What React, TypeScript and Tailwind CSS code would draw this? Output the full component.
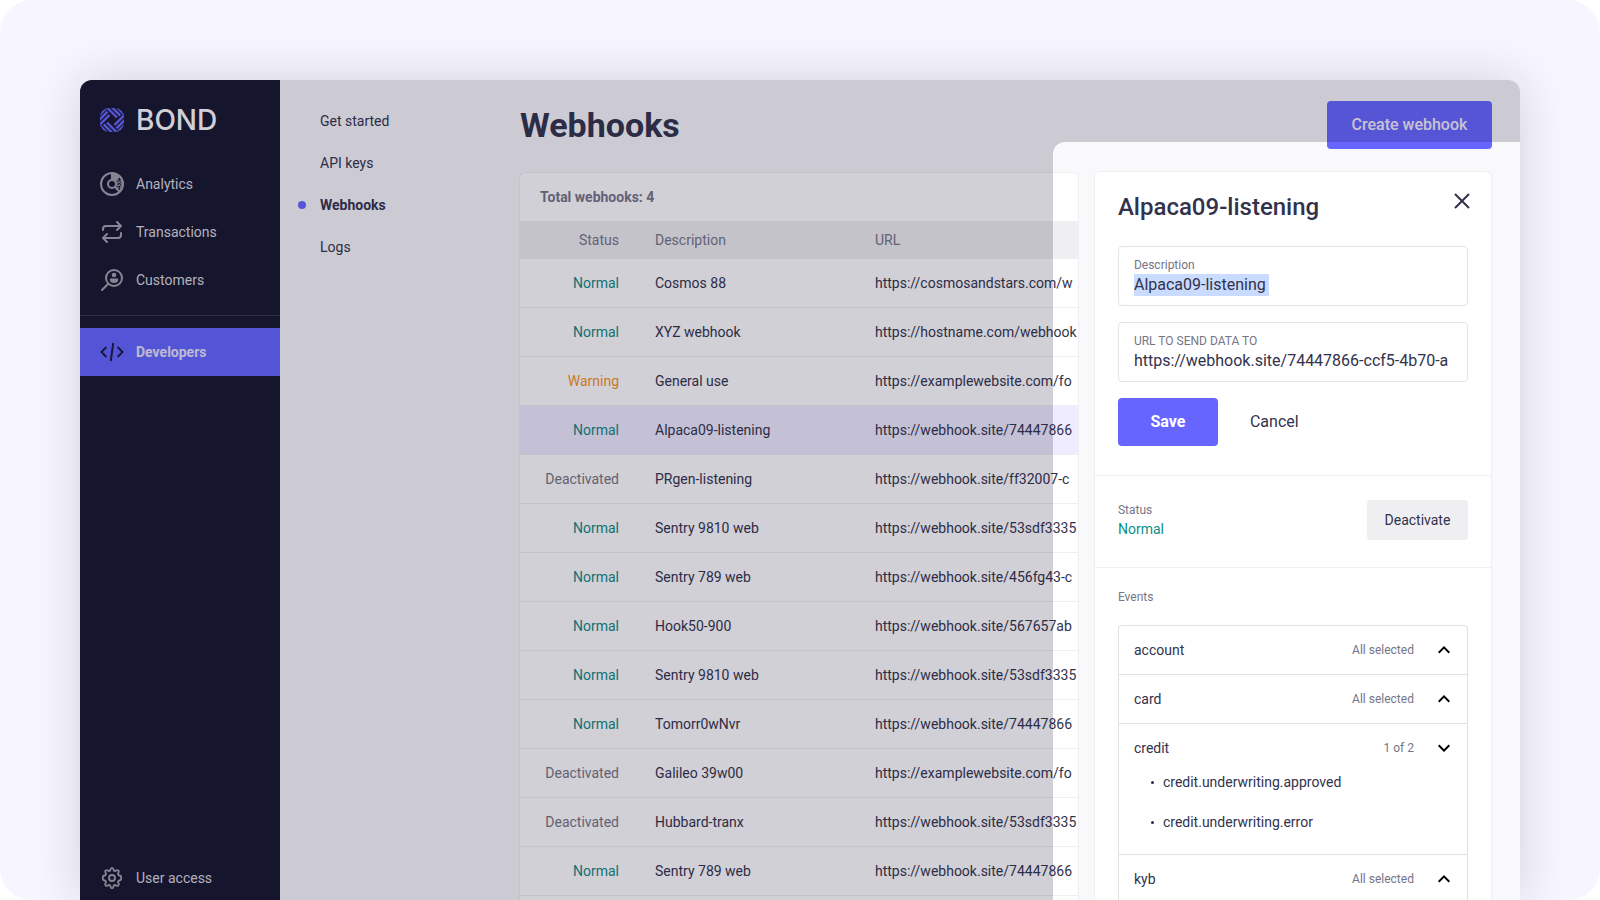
const statusColor: Record<string, string> = {
  Normal: 'text-[#0d8a83]',
  Warning: 'text-[#f7931a]',
  Deactivated: 'text-[#757583]',
}

const webhooks = [
  { status: 'Normal', name: 'Cosmos 88', url: 'https://cosmosandstars.com/w' },
  { status: 'Normal', name: 'XYZ webhook', url: 'https://hostname.com/webhook' },
  { status: 'Warning', name: 'General use', url: 'https://examplewebsite.com/fo' },
  { status: 'Normal', name: 'Alpaca09-listening', url: 'https://webhook.site/74447866', selected: true },
  { status: 'Deactivated', name: 'PRgen-listening', url: 'https://webhook.site/ff32007-c' },
  { status: 'Normal', name: 'Sentry 9810 web', url: 'https://webhook.site/53sdf3335' },
  { status: 'Normal', name: 'Sentry 789 web', url: 'https://webhook.site/456fg43-c' },
  { status: 'Normal', name: 'Hook50-900', url: 'https://webhook.site/567657ab' },
  { status: 'Normal', name: 'Sentry 9810 web', url: 'https://webhook.site/53sdf3335' },
  { status: 'Normal', name: 'Tomorr0wNvr', url: 'https://webhook.site/74447866' },
  { status: 'Deactivated', name: 'Galileo 39w00', url: 'https://examplewebsite.com/fo' },
  { status: 'Deactivated', name: 'Hubbard-tranx', url: 'https://webhook.site/53sdf3335' },
  { status: 'Normal', name: 'Sentry 789 web', url: 'https://webhook.site/74447866' },
]

const events = [
  { name: 'account', count: 'All selected', items: [] as string[] },
  { name: 'card', count: 'All selected', items: [] },
  { name: 'credit', count: '1 of 2', items: ['credit.underwriting.approved', 'credit.underwriting.error'] },
  { name: 'kyb', count: 'All selected', items: [] },
]

function LogoMark() {
  return (
    <svg viewBox="0 0 24 24" className="size-6" aria-hidden="true">
      <defs>
        <clipPath id="mark">
          <rect width="24" height="24" rx="9" />
        </clipPath>
      </defs>
      <g clipPath="url(#mark)" stroke="#6666ff" strokeWidth="2.4" fill="none">
        {[0, 90, 180, 270].map((angle) => (
          <path key={angle} d="M-1 17.500 9.500 7M-1 12.300 7.600 3.700M-1 7.200 7.200-1" transform={`rotate(${angle} 12 12)`} />
        ))}
      </g>
    </svg>
  )
}

function AnalyticsIcon() {
  return (
    <svg viewBox="0 0 24 24" className="size-6" fill="none" stroke="currentColor" strokeWidth="2" aria-hidden="true">
      <circle cx="12" cy="12" r="11" />
      <circle cx="12" cy="12" r="4" />
      <path d="M11 1.500A10.500 10.500 0 0 1 20 5L15.500 9.500A5 5 0 0 0 11 7Z" fill="currentColor" stroke="none" />
      <path d="M15 15l5 5" />
      <path d="M18 7.500v9M21 8v9M16 10h6M16 13h6M17 16h5" strokeWidth="1.300" strokeDasharray="1.500 1.200" />
    </svg>
  )
}

function TransactionsIcon() {
  return (
    <svg viewBox="0 0 24 24" className="size-6" fill="none" stroke="currentColor" strokeWidth="2" strokeLinecap="round" strokeLinejoin="round" aria-hidden="true">
      <path d="M3 10V9a3 3 0 0 1 3-3h15M17 2l4 4-4 4" />
      <path d="M21 13v2a3 3 0 0 1-3 3H3M7 14l-4 4 4 4" />
    </svg>
  )
}

function CustomersIcon() {
  return (
    <svg viewBox="0 0 24 24" className="size-6" fill="none" stroke="currentColor" strokeWidth="2" strokeLinecap="round" aria-hidden="true">
      <circle cx="14" cy="10" r="8" />
      <path d="M8 16l-6 6" />
      <circle cx="14" cy="7" r="2.300" fill="currentColor" stroke="none" />
      <path d="M9.900 10.500h8.200v1.500a4.100 3 0 0 1-8.200 0Z" fill="currentColor" stroke="none" />
    </svg>
  )
}

function CodeIcon() {
  return (
    <svg viewBox="0 0 24 24" className="size-6" fill="none" stroke="currentColor" strokeWidth="2" aria-hidden="true">
      <path d="M6.500 7l-5 5 5 5M17.500 7l5 5-5 5M13.200 3l-2.400 18" />
    </svg>
  )
}

function GearIcon() {
  return (
    <svg viewBox="0 0 24 24" className="size-6" fill="none" stroke="currentColor" strokeWidth="1.800" strokeLinejoin="round" aria-hidden="true">
      <circle cx="12" cy="12" r="3" />
      <path d="M10.500 3.500c.3-2.300 2.700-2.300 3 0 .2 1.300 1.500 1.900 2.600 1.100 1.900-1.300 3.600.4 2.300 2.300-.8 1.100-.2 2.400 1.100 2.600 2.300.3 2.300 4.700 0 5-1.300.2-1.900 1.500-1.100 2.600 1.300 1.900-.4 3.600-2.300 2.300-1.100-.8-2.400-.2-2.600 1.100-.3 2.300-2.700 2.300-3 0-.2-1.300-1.500-1.900-2.600-1.100-1.900 1.300-3.600-.4-2.300-2.300.8-1.100.2-2.400-1.100-2.600-2.300-.3-2.300-4.700 0-5 1.300-.2 1.900-1.500 1.100-2.600-1.300-1.900.4-3.600 2.300-2.300 1.100.8 2.400.2 2.600-1.100Z" />
    </svg>
  )
}

function Chevron({ open }: { open: boolean }) {
  return (
    <svg viewBox="0 0 12 12" className="size-3" fill="none" stroke="#000" strokeWidth="2" aria-hidden="true">
      <path d={open ? 'M.7 3.300 6 8.600l5.300-5.300' : 'M.7 8.700 6 3.400l5.300 5.300'} />
    </svg>
  )
}

const navLink = 'flex h-12 items-center gap-3 px-5 text-[#d9d9de]'

function Sidebar() {
  return (
    <aside className="flex w-[200px] shrink-0 flex-col bg-[#14162d] text-sm">
      <div className="flex h-20 items-center gap-3 px-5">
        <LogoMark />
        <span className="font-[Inter,sans-serif] text-[28px] leading-8 font-medium text-white">BOND</span>
      </div>
      <nav className="flex grow flex-col" aria-label="Main">
        <a href="#analytics" className={navLink}><span className="text-[#a2a2ad]"><AnalyticsIcon /></span>Analytics</a>
        <a href="#transactions" className={navLink}><span className="text-[#a2a2ad]"><TransactionsIcon /></span>Transactions</a>
        <a href="#customers" className={navLink}><span className="text-[#a2a2ad]"><CustomersIcon /></span>Customers</a>
        <div className="mt-[11px] mb-3 h-px bg-[#33324a]" />
        <a href="#developers" aria-current="page" className="flex h-12 items-center gap-3 bg-[#6266ff] px-5 font-bold text-[#e6e3fb]">
          <span className="text-[#1b1a44]"><CodeIcon /></span>Developers
        </a>
        <a href="#access" className="mt-auto flex h-11 items-center gap-3 px-5 text-[#d9d9de]">
          <span className="text-[#a2a2ad]"><GearIcon /></span>User access
        </a>
      </nav>
    </aside>
  )
}

function SubNav() {
  return (
    <nav className="w-[239px] shrink-0 pt-5 pl-10 text-sm" aria-label="Developers">
      <a href="#start" className="flex h-[42px] items-center">Get started</a>
      <a href="#keys" className="flex h-[42px] items-center">API keys</a>
      <a href="#webhooks" aria-current="page" className="relative flex h-[42px] items-center font-bold">
        <span className="absolute -left-[22px] size-2 rounded-full bg-[#6666ff]" />
        Webhooks
      </a>
      <a href="#logs" className="flex h-[42px] items-center">Logs</a>
    </nav>
  )
}

function WebhookTable() {
  return (
    <section className="mt-px min-w-0 grow overflow-hidden rounded-t-md border border-b-0 border-[#efeff2] bg-white text-sm">
      <h2 className="flex h-12 items-center px-5 font-bold text-[#757587]">Total webhooks: 4</h2>
      <table className="w-full table-fixed border-separate border-spacing-0">
        <thead>
          <tr className="h-[38px] bg-[#efeff1] text-[#757587]">
            <th className="w-[117px] pr-[18px] text-right font-normal">Status</th>
            <th className="w-[220px] pl-[18px] text-left font-normal">Description</th>
            <th className="pl-[18px] text-left font-normal">URL</th>
          </tr>
        </thead>
        <tbody>
          {webhooks.map((hook, i) => (
            <tr key={i} className={hook.selected ? 'h-[49px] bg-[#efecff]' : 'h-[49px]'}>
              <td className={`border-b border-[#efeff1] pr-[18px] text-right ${statusColor[hook.status]}`}>{hook.status}</td>
              <td className="border-b border-[#efeff1] pl-[18px]">{hook.name}</td>
              <td className="overflow-hidden border-b border-[#efeff1] pl-[18px] whitespace-nowrap">{hook.url}</td>
            </tr>
          ))}
        </tbody>
      </table>
    </section>
  )
}

function WebhookPanel() {
  return (
    <section className="w-[398px] shrink-0 rounded-t-md border border-b-0 border-[#efeff2] bg-white">
      <form className="flex flex-col gap-4 border-b border-[#efeff1] px-[23px] pb-[29px]" onSubmit={(e) => e.preventDefault()}>
        <div className="flex h-[58px] items-end justify-between">
          <h2 className="pb-[7px] text-2xl font-medium">Alpaca09-listening</h2>
          <button type="button" aria-label="Close" className="-mr-0.5 mb-[21px] size-4">
            <svg viewBox="0 0 16 16" className="size-4" fill="none" stroke="currentColor" strokeWidth="2" aria-hidden="true">
              <path d="M1 1l14 14M15 1L1 15" />
            </svg>
          </button>
        </div>
        <div className="flex h-[60px] flex-col items-start rounded border border-[#e4e4e8] px-[15px] pt-[10px]">
          <label htmlFor="description" className="text-xs leading-[17px] text-[#757587]">Description</label>
          <input id="description" defaultValue="Alpaca09-listening" className="field-sizing-content h-[22px] bg-[#c9dbff] pr-[3px] outline-none" />
        </div>
        <div className="flex h-[60px] flex-col rounded border border-[#e4e4e8] px-[15px] pt-[10px]">
          <label htmlFor="url" className="text-xs leading-[17px] text-[#757587]">URL TO SEND DATA TO</label>
          <input id="url" defaultValue="https://webhook.site/74447866-ccf5-4b70-a" className="h-[22px] w-full outline-none" />
        </div>
        <div className="flex gap-4">
          <button type="submit" className="h-12 w-[100px] rounded bg-[#6666ff] font-bold text-white">Save</button>
          <button type="button" className="h-12 px-4">Cancel</button>
        </div>
      </form>
      <div className="flex h-[92px] items-center justify-between border-b border-[#efeff1] px-[23px] pb-[3px]">
        <div className="flex flex-col gap-px">
          <div className="text-xs text-[#757587]">Status</div>
          <div className="text-sm text-[#0d8f88]">Normal</div>
        </div>
        <button type="button" className="h-10 w-[101px] rounded bg-[#efeff1] text-sm">Deactivate</button>
      </div>
      <div className="px-[23px]">
        <h3 className="flex h-[57px] items-center text-xs text-[#757587]">Events</h3>
        <ul className="rounded-t border border-b-0 border-[#e1e1e5] text-sm">
          {events.map((event) => (
            <li key={event.name} className="border-b border-[#e1e1e5]">
              <button type="button" aria-expanded={event.items.length > 0} className="flex h-12 w-full items-center pr-[17px] pl-[15px]">
                {event.name}
                <span className="mr-6 ml-auto text-xs text-[#757587]">{event.count}</span>
                <Chevron open={event.items.length > 0} />
              </button>
              {event.items.length > 0 && (
                <ul className="-mt-[10px] pb-3">
                  {event.items.map((item) => (
                    <li key={item} className="flex h-10 items-center gap-[9px] pl-8">
                      <span className="size-[3px] rounded-full bg-[#2e2e47]" />
                      {item}
                    </li>
                  ))}
                </ul>
              )}
            </li>
          ))}
        </ul>
      </div>
    </section>
  )
}

export default function App() {
  return (
    <div className="h-screen bg-white font-[Roboto,sans-serif] text-base text-[#32324c]">
      <div className="h-full overflow-hidden rounded-[32px] bg-[#f7f5ff] px-20 pt-20">
        <div className="relative flex h-full overflow-hidden rounded-t-xl bg-[#f9f9fc] shadow-[0_0_50px_rgba(24,22,40,0.16)]">
          <Sidebar />
          <SubNav />
          <main className="flex min-w-0 grow flex-col pr-7">
            <header className="flex h-[90px] shrink-0 items-center justify-between">
              <h1 className="pl-px text-[34px] font-bold">Webhooks</h1>
              <button type="button" className="h-12 w-[165px] rounded bg-[#6666ff] font-medium text-[#f3effb]">Create webhook</button>
            </header>
            <div className="flex grow gap-[15px] pt-px">
              <WebhookTable />
              <WebhookPanel />
            </div>
          </main>
          <div className="pointer-events-none absolute top-[62px] right-0 -bottom-5 w-[467px] rounded-l-xl shadow-[0_0_0_2000px_rgba(24,22,50,0.2)]" />
        </div>
      </div>
    </div>
  )
}
